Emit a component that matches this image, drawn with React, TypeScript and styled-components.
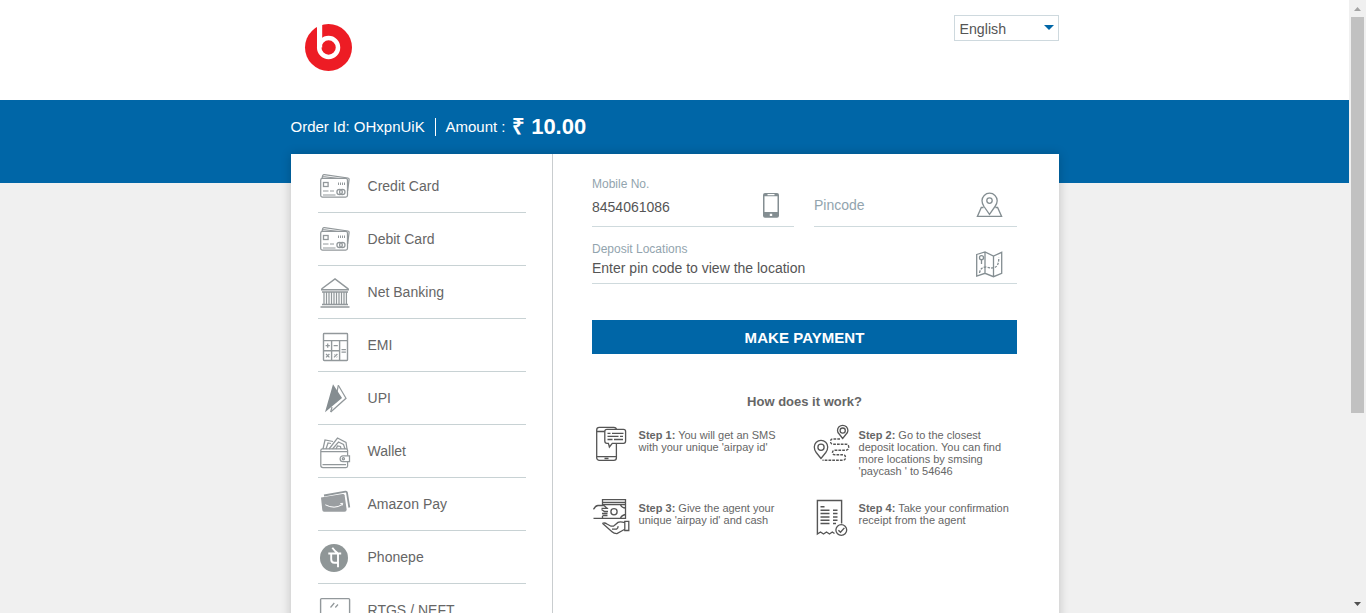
import React from "react";
import styled, { createGlobalStyle } from "styled-components";

const blue = "#0066a7";
const line = "#c8d2d4";
const muted = "#92a4ae";
const iconGray = "#92989b";

const GlobalStyle = createGlobalStyle`
  *, *::before, *::after { box-sizing: border-box; }
  body { margin: 0; font-family: "Liberation Sans", Arial, sans-serif; color: #666; background: #fff; overflow: hidden; }
`;

const Shell = styled.div`
  display: flex;
  height: 613px;
  overflow: hidden;
`;

const Page = styled.div`
  display: flex;
  flex-direction: column;
  flex: 1;
  min-width: 0;
`;

const Container = styled.div`
  width: 768px;
  margin-left: 291px;
`;

const Header = styled.header`
  flex: none;
  height: 100px;
  background: #fff;
`;

const HeaderRow = styled(Container)`
  display: flex;
  justify-content: space-between;
  align-items: flex-start;
`;

const Logo = styled.svg`
  display: block;
  width: 48px;
  height: 48px;
  margin: 23px 0 0 13px;
`;

const LanguageSelect = styled.button`
  display: flex;
  align-items: center;
  justify-content: space-between;
  width: 105px;
  height: 26px;
  margin-top: 15px;
  padding: 2px 4px 0 4.5px;
  border: 1px solid #ced9de;
  background: #fff;
  color: #555;
  font: 14.2px "Liberation Sans", Arial, sans-serif;
`;

const Caret = styled.span`
  border: 5px solid transparent;
  border-top-color: ${blue};
  border-bottom-width: 0;
  margin-bottom: 4px;
`;

const Body = styled.main`
  flex: 1;
  min-height: 0;
  background: linear-gradient(${blue} 83px, #f0f0f0 83px);
`;

const OrderBar = styled(Container)`
  display: flex;
  align-items: center;
  height: 54px;
  padding-bottom: 1px;
  color: #fff;
  font-size: 15px;
`;

const OrderId = styled.span`
  height: 18px;
  line-height: 18px;
  width: 145px;
  border-right: 1px solid #fff;
  margin-right: 9.5px;
  text-indent: -0.5px;
`;

const Amount = styled.strong`
  margin-left: 6.5px;
  font-size: 22px;
  line-height: 24px;
`;

const Card = styled(Container)`
  display: flex;
  height: 700px;
  background: #fff;
  box-shadow: 0 0 10px rgba(0, 0, 0, 0.2);
`;

const Methods = styled.ul`
  list-style: none;
  width: 262px;
  margin: 0;
  padding: 6px 26px 0 27px;
  border-right: 1px solid #c9cdcf;
`;

const Method = styled.li`
  display: flex;
  align-items: center;
  height: 53px;
  border-bottom: 1px solid ${line};
  font-size: 14px;
  letter-spacing: 0.02px;
`;

const MethodIcon = styled.svg`
  flex: none;
  width: 36px;
  height: 52px;
  margin-right: 13.5px;
  fill: none;
  stroke: ${iconGray};
  stroke-width: 1.25;
`;

const Panel = styled.section`
  width: 465px;
  padding: 22px 0 0 39px;
`;

const FieldRow = styled.div`
  display: grid;
  grid-template-columns: 202px 203px;
  gap: 20px;
  width: 425px;
`;

const Field = styled.div<{ $height: number; $pad?: number }>`
  display: flex;
  justify-content: space-between;
  height: ${(p) => p.$height}px;
  padding-right: ${(p) => p.$pad ?? 14}px;
  border-bottom: 1px solid #cfdadd;
`;

const FieldText = styled.div<{ $gap: number }>`
  display: flex;
  flex-direction: column;
  gap: ${(p) => p.$gap}px;
  color: #555;
  font-size: 14px;
  line-height: 16px;
`;

const Label = styled.label`
  color: ${muted};
  font-size: 12px;
  line-height: 16px;
`;

const Placeholder = styled.span`
  color: ${muted};
  padding-top: 21px;
`;

const FieldIcon = styled.svg<{ $top: number }>`
  width: 28px;
  height: 28px;
  margin-top: ${(p) => p.$top}px;
  fill: none;
  stroke: #848e92;
  stroke-width: 1.3;
`;

const DepositField = styled(Field)`
  width: 425px;
  margin-top: 14px;
`;

const PayButton = styled.button`
  display: block;
  width: 425px;
  height: 34px;
  margin-top: 36px;
  padding: 0;
  border: 0;
  background: ${blue};
  color: #fff;
  font: bold 15px "Liberation Sans", Arial, sans-serif;
  letter-spacing: 0.05px;
`;

const HowTitle = styled.h2`
  width: 425px;
  margin: 40px 0 19px;
  text-align: center;
  font-size: 13px;
  line-height: 16px;
`;

const Steps = styled.div`
  display: grid;
  grid-template-columns: 220px 220px;
  grid-auto-rows: 73px;
`;

const Step = styled.div`
  display: flex;
  gap: 6.6px;
  margin-top: -7px;
`;

const StepIcon = styled.svg`
  flex: none;
  width: 40px;
  height: 42px;
  fill: none;
  stroke: #555;
  stroke-width: 1.3;
`;

const StepText = styled.p`
  margin: 7px 0 0;
  font-size: 11px;
  line-height: 12px;
  white-space: nowrap;
`;

const Scrollbar = styled.div`
  display: flex;
  flex-direction: column;
  align-items: center;
  width: 17px;
  padding: 7px 0 7px;
  background: #f0f0f0;
`;

const Arrow = styled.svg`
  width: 7px;
  height: 4px;
  flex: none;
`;

const Thumb = styled.div`
  width: 13px;
  height: 396px;
  margin: 6px 0 auto;
  background: #c1c1c1;
`;

const CardIcon = () => (
  <>
    <path d="M4 18.5 4.7 15.6Q5 14.4 6.3 14.6L30 18Q31.3 18.2 31.1 19.5L29.6 31M5 16.5 28 19.5" />
    <rect x="2.7" y="18.3" width="26.8" height="18.7" rx="1.8" fill="#fff" />
    <rect x="5.5" y="22.5" width="4.6" height="4" strokeWidth="1.3" />
    <path d="M20.5 22.5v2.5M22.5 22.5v2.5M24.5 22.5v2.5M26.5 22.5v2.5M5 31h5.5M12 31h4M5 35h12.5" strokeWidth="1" />
    <circle cx="21.6" cy="32" r="2.7" />
    <circle cx="24.3" cy="32" r="2.7" />
  </>
);

const methods: { name: string; icon: React.ReactNode }[] = [
  { name: "Credit Card", icon: <CardIcon /> },
  { name: "Debit Card", icon: <CardIcon /> },
  {
    name: "Net Banking",
    icon: (
      <>
        <path d="M3.5 23 17 13 30.5 23.2M3 23.8h28M4 26h26M4 38.5h26M2.5 41h29" strokeWidth="1.5" />
        <path d="M6 26v12M8.5 26v12M11 26v12M13.5 26v12M16 26v12M18.5 26v12M21 26v12M23.5 26v12M26 26v12M28.4 26v12" />
      </>
    ),
  },
  {
    name: "EMI",
    icon: (
      <>
        <rect x="5.5" y="14.5" width="24" height="27" rx=".7" strokeWidth="1.4" />
        <path d="M5.5 21.6h24M13.6 21.6v20M21.6 21.6v20M5.5 31.7h16.1" strokeWidth="1.4" />
        <path d="M7.6 26.7h4.2M9.7 24.6v4.2M15.6 26.7h4.2M23.5 30.6h4.4M23.5 33h4.4M8 35l3.4 3.4M11.4 35 8 38.4M16 38.4l3.4-3.4M16.5 35.5l.5.5M18.7 37.7l.5.5" />
      </>
    ),
  },
  {
    name: "UPI",
    icon: (
      <>
        <path d="M20.3 13.3 28 26.3 12.7 40" />
        <path d="M20.3 13.3 19 20M12.7 40 14 35" />
        <path d="M15 12.3 24 26 7 40.3Z" fill="#858d91" stroke="none" />
      </>
    ),
  },
  {
    name: "Wallet",
    icon: (
      <>
        <path d="M5 24 7 15l8 1.5M8 24l2-6 3 .5M11 24l8.5-11 8.5 4.5 1 6.5M14.5 24l6-7 5 2.5 1.5 4.5M18 24l1.5-3 3 .5.5 2.5" />
        <path d="M4.5 23.8H28Q29.6 23.8 29.6 25.5V31M29.6 36.8V41Q29.6 42.5 28 42.5H5Q2.8 42.5 2.8 40.5V25.5Q2.8 23.8 4.5 23.8M3 26.7h26.5M4.5 39.5H28" />
        <path d="M31.5 30.8H25a2.9 2.9 0 0 0 0 5.8h6.5Z" fill="#fff" />
        <circle cx="25.4" cy="33.7" r="1.1" />
      </>
    ),
  },
  {
    name: "Amazon Pay",
    icon: (
      <>
        <path d="M6 17.5 27.5 13.7Q28.7 13.5 29 14.8L31.3 29.5" strokeWidth="1.8" />
        <path d="M3 19.6 24.5 16Q26.3 15.7 26.6 17.3L28.6 31.3Q28.8 33.7 26.5 33.7H6Q4.5 33.7 4.3 32Z" fill="#9a9ea1" stroke="none" />
        <path d="M7.3 26.8Q16.5 31.6 24 26.6M22.3 25.6l2.4-.3-.6 2.2" stroke="#fff" strokeWidth="1" />
      </>
    ),
  },
  {
    name: "Phonepe",
    icon: (
      <>
        <circle cx="16" cy="27" r="14" fill="#8f9697" stroke="none" />
        <path d="M10.3 22.5H23.2M13.2 22.5V28.3Q13.2 31.8 16.4 31.8H20M20 22.5V36.3M19.6 22Q17.3 20.8 14.3 16.8" stroke="#fff" strokeWidth="1.9" />
      </>
    ),
  },
  {
    name: "RTGS / NEFT",
    icon: (
      <>
        <rect x="2.6" y="14.6" width="29" height="22" rx="1" strokeWidth="1.4" />
        <path d="M12.5 23.5 16.3 19M17.3 23.5 20 20.5" />
      </>
    ),
  },
];

const steps: { n: number; lines: string[]; icon: React.ReactNode }[] = [
  {
    n: 1,
    lines: ["You will get an SMS", "with your unique 'airpay id'"],
    icon: (
      <>
        <rect x="4.7" y="5.4" width="19.7" height="33" rx="2.6" />
        <path d="M5 9.5H24M5 34.7H24M12.5 36.5h4" />
        <path d="M15 7.4H31.5Q33.6 7.4 33.6 9.5V19Q33.6 21.3 31.5 21.3H20.3L17.4 25 16.4 21.3H15Q12.8 21.3 12.8 19V9.5Q12.8 7.4 15 7.4Z" fill="#fff" />
        <path d="M15.5 11.3h3M20 11.3h11.5M15.5 14.3h11M28 14.3h3M15.5 17.5h5M22 17.5h9" />
      </>
    ),
  },
  {
    n: 2,
    lines: ["Go to the closest", "deposit location. You can find", "more locations by smsing", "'paycash ' to 54646"],
    icon: (
      <>
        <path d="M9 36.5 4.2 30.5Q2.3 28 2.3 25a6.7 6.7 0 0 1 13.4 0Q15.7 28 13.8 30.5Z" />
        <circle cx="9" cy="25.3" r="3.1" />
        <path d="M30.7 16.5 27.2 12Q25.5 10.5 25.5 8.5a5.2 5.2 0 0 1 10.4 0Q35.9 10.5 34.2 12Z" />
        <circle cx="30.7" cy="8.6" r="2.6" />
        <path d="M28 17H21Q18.5 17 18.5 19.5T21 22.2H34Q36.7 22.2 36.7 25T34 28.2H23Q20.5 28.2 20.5 30.5T23 32.8H31Q33.5 32.8 33.5 35.5T31 38.3H10.5" strokeDasharray="2.7 1.1" strokeWidth="1.4" />
      </>
    ),
  },
  {
    n: 3,
    lines: ["Give the agent your", "unique 'airpay id' and cash"],
    icon: (
      <>
        <path d="M10.5 10V4.6H33.5V23.4H1.5M10.5 7.3h23M10.5 9.5h23" />
        <path d="M1.5 14.4Q3.5 10.5 6 10.5H12L15 13.3H9.5M15 13.3h1M9.5 14.5 12.5 16.5H16M10 18.5h5.5M10.5 20.5h5M28.5 10Q30 13 33.5 13M33.5 19.5Q30 20 28.5 23M10.5 23V21" />
        <circle cx="22" cy="16.7" r="3.1" />
        <path d="M10.4 28.3Q13 27.5 15 29L19 31.2H21.5L26 27.4Q28 26.3 32.8 27.6V34.2L25 38.6Q22 38.7 20 36.7L10.4 28.3M32.8 26.4H36.8V35.5H32.8ZM20 34.2H24.5Q26.5 33 26 31.2" />
      </>
    ),
  },
  {
    n: 4,
    lines: ["Take your confirmation", "receipt from the agent"],
    icon: (
      <>
        <path d="M29.6 28.5V5.5H5.4V39L8.5 37 11.5 39 14.5 37 17.5 39 20.3 37 22.5 38.5" strokeWidth="1.4" />
        <path d="M8.5 11.8h4M8.5 15.2h9M8.5 18.6h9M8.5 22h9M8.5 25.3h9M8.5 28.6h9M21 15.2h4.5M21 18.6h4.5M21 22h4.5M21 25.3h4.5M21 28.6h3" strokeWidth="1.5" />
        <circle cx="29.3" cy="35" r="5.4" fill="#fff" />
        <path d="M26.4 35.2 28.5 37.3 32.4 32.9" strokeWidth="1.4" />
      </>
    ),
  },
];

export default function App() {
  return (
    <>
      <GlobalStyle />
      <Shell>
        <Page>
          <Header>
            <HeaderRow>
              <Logo viewBox="0 0 48 48">
                <circle cx="24.5" cy="24.5" r="23.5" fill="#ed1c24" />
                <path d="M15.6 0V24.5" stroke="#fff" strokeWidth="5.2" />
                <circle cx="24.6" cy="24.5" r="9.4" fill="none" stroke="#fff" strokeWidth="4.5" />
              </Logo>
              <LanguageSelect>
                English
                <Caret />
              </LanguageSelect>
            </HeaderRow>
          </Header>
          <Body>
            <OrderBar>
              <OrderId>Order Id: OHxpnUiK</OrderId>
              <span>Amount :</span>
              <Amount>₹ 10.00</Amount>
            </OrderBar>
            <Card>
              <Methods>
                {methods.map((m) => (
                  <Method key={m.name}>
                    <MethodIcon viewBox="0 0 36 52">{m.icon}</MethodIcon>
                    {m.name}
                  </Method>
                ))}
              </Methods>
              <Panel>
                <FieldRow>
                  <Field $height={51} $pad={9}>
                    <FieldText $gap={7}>
                      <Label>Mobile No.</Label>
                      <span>8454061086</span>
                    </FieldText>
                    <FieldIcon $top={15} viewBox="0 0 28 28">
                      <path fillRule="evenodd" stroke="none" fill="#848e92" d="M8 2H20Q22 2 22 4V24.7Q22 26.7 20 26.7H8Q6 26.7 6 24.7V4Q6 2 8 2ZM7.5 5.3V21H20.5V5.3ZM10.5 3V4.2H17.5V3ZM12.8 22.8V25H15.2V22.8Z" />
                    </FieldIcon>
                  </Field>
                  <Field $height={51}>
                    <FieldText $gap={0}>
                      <Placeholder>Pincode</Placeholder>
                    </FieldText>
                    <FieldIcon $top={15} viewBox="0 0 28 28">
                      <path d="M14.5 23.3 9 15.5Q7 12.5 7 9.8a7.6 7.6 0 0 1 15.2 0Q22.2 12.5 20 15.5ZM8.5 16.5H6.3L2.4 25.4H26.6L22.6 16.5H20.5" />
                      <circle cx="14.5" cy="9.6" r="2.7" />
                    </FieldIcon>
                  </Field>
                </FieldRow>
                <DepositField $height={43}>
                  <FieldText $gap={3}>
                    <Label>Deposit Locations</Label>
                    <span>Enter pin code to view the location</span>
                  </FieldText>
                  <FieldIcon $top={9} viewBox="0 0 28 28">
                    <path d="M1.7 4.5 10 2 18.5 6 26.7 2.3V23.3L18.5 26.7 10 23.3 1.7 26ZM10 2V23.3M18.5 6V26.7" />
                    <circle cx="6.5" cy="7.7" r="2" />
                    <path d="M6.5 10v4" />
                    <path d="M4.5 23Q5.5 17 11 17 17 19 20.5 17 23.8 15.5 23.8 7.5" strokeDasharray="2.5 1.2" />
                  </FieldIcon>
                </DepositField>
                <PayButton>MAKE PAYMENT</PayButton>
                <HowTitle>How does it work?</HowTitle>
                <Steps>
                  {steps.map((s) => (
                    <Step key={s.n}>
                      <StepIcon viewBox="0 0 40 42">{s.icon}</StepIcon>
                      <StepText>
                        <b>Step {s.n}:</b> {s.lines[0]}
                        {s.lines.slice(1).map((l) => (
                          <React.Fragment key={l}>
                            <br />
                            {l}
                          </React.Fragment>
                        ))}
                      </StepText>
                    </Step>
                  ))}
                </Steps>
              </Panel>
            </Card>
          </Body>
        </Page>
        <Scrollbar>
          <Arrow viewBox="0 0 7 4">
            <path d="M0 4 3.5 0 7 4Z" fill="#a3a3a3" />
          </Arrow>
          <Thumb />
          <Arrow viewBox="0 0 7 4">
            <path d="M0 0H7L3.5 4Z" fill="#505050" />
          </Arrow>
        </Scrollbar>
      </Shell>
    </>
  );
}
